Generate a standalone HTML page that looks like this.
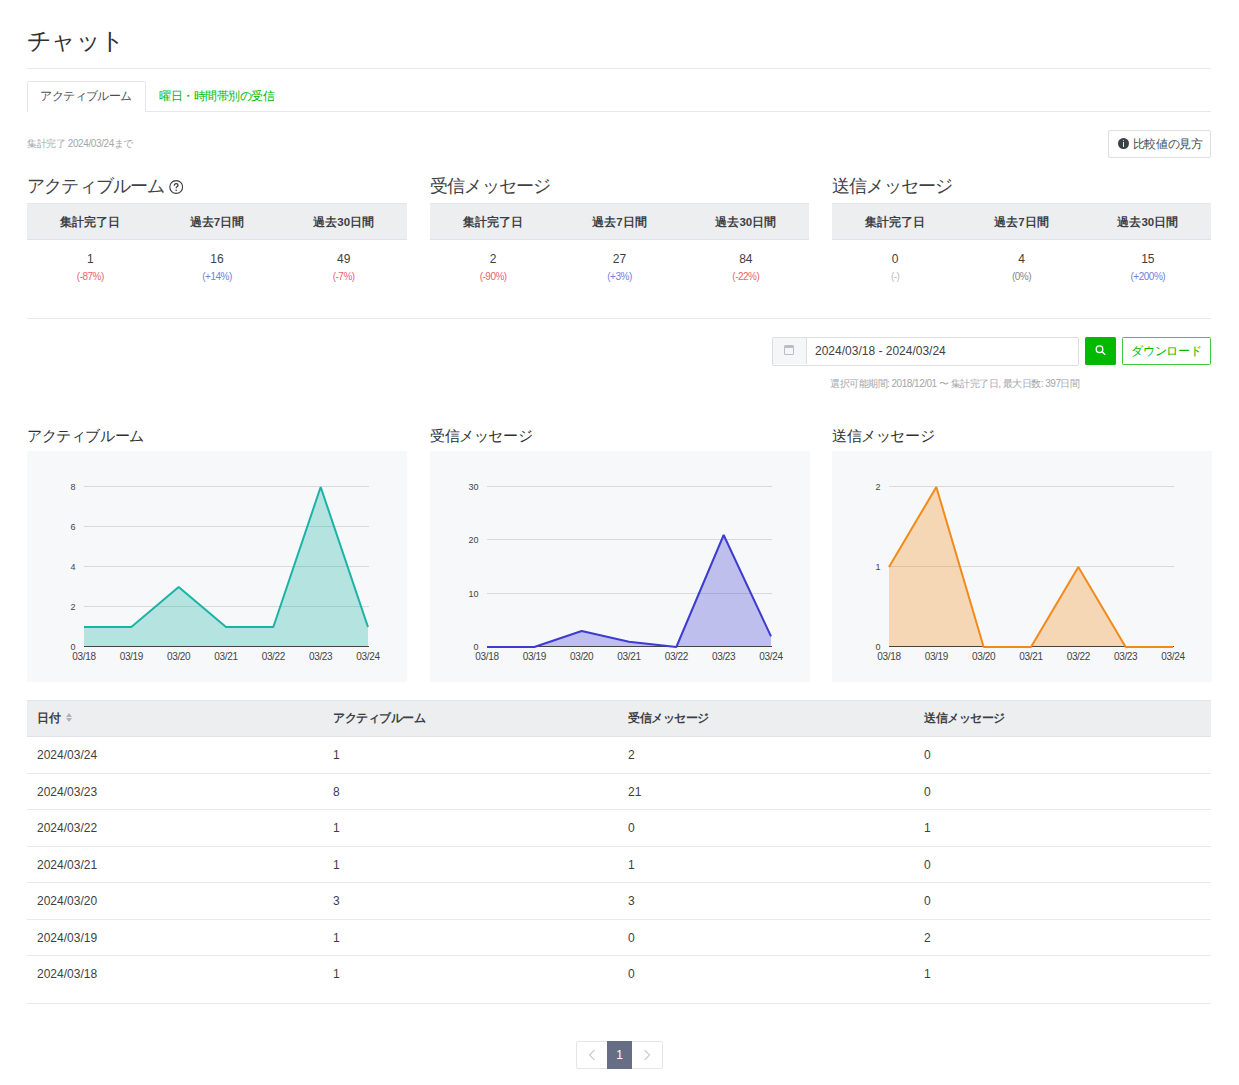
<!DOCTYPE html>
<html lang="ja">
<head>
<meta charset="utf-8">
<style>
*{box-sizing:border-box;margin:0;padding:0}
html,body{width:1239px;height:1085px;overflow:hidden;background:#fff}
body{font-family:"Liberation Sans",sans-serif;color:#333;position:relative}
.a{position:absolute;white-space:nowrap}
.hr{position:absolute;height:1px;background:#e9eaec}
.title{left:27px;top:26px;font-size:24px;line-height:30px;color:#2f3033;letter-spacing:-0.6px}
.tab{left:27px;top:81px;width:119px;height:31px;border:1px solid #e5e7ea;border-radius:2px 2px 0 0;padding-right:1px;border-bottom:none;background:#fff;font-size:12px;line-height:29px;text-align:center;color:#4a4d52;letter-spacing:-0.6px}
.tab2{left:159px;top:82px;font-size:12px;line-height:29px;color:#00b900;letter-spacing:-0.5px}
.note{font-size:10px;color:#a3a6ab;letter-spacing:-0.4px}
.btn1{left:1108px;top:130px;width:103px;height:28px;border:1px solid #dcdee2;border-radius:2px;font-size:12px;line-height:26px;color:#4a4d52;padding-left:23.5px;letter-spacing:-0.3px}
.info{position:absolute;left:9px;top:7px;width:11px;height:11px;border-radius:50%;background:#3c4047}
.info:after{content:"";position:absolute;left:5px;top:4px;width:1.2px;height:5px;background:#e8e9ea}
.info:before{content:"";position:absolute;left:5px;top:2px;width:1.2px;height:1.2px;background:#c8c9cb}
.h2{font-size:18px;line-height:24px;color:#404246;letter-spacing:-0.8px}
.qm{position:absolute;width:15px;height:15px;border:1.3px solid #4a4d52;border-radius:50%;font-size:10px;line-height:12px;text-align:center;color:#4a4d52}
.sum{position:absolute;top:203px;width:379px;height:88px}
.sum .hd{height:37px;background:#eceef0;border-top:1px solid #e4e6e9;border-bottom:1px solid #dfe2e6;display:flex}
.sum .hd div{flex:1;text-align:center;font-size:11.5px;font-weight:bold;line-height:37px;color:#3c3f44}
.sum .bd{display:flex}
.sum .bd div{flex:1;text-align:center}
.v{font-size:12px;line-height:16px;color:#3c3f44;margin-top:11px}
.p{font-size:10px;line-height:14px;margin-top:3px;letter-spacing:-0.5px}
.r{color:#e9646c}.b{color:#7380de}.g{color:#b9bcc1}
.chh{font-size:15px;line-height:20px;color:#2f3033;letter-spacing:-0.4px}
.chart{position:absolute;top:451px;width:380px;height:231px;background:#f7f8fa}
.tbl{position:absolute;left:27px;top:700px;width:1184px}
.tbl .row{position:relative;height:36.5px;border-bottom:1px solid #e9eaec;font-size:12px;color:#3c3f44}
.tbl .row span{position:absolute;top:0;line-height:36px}
.tbl .th span{top:-1px}
.tbl .th{background:#eceef0;font-weight:bold;height:37px;border-top:1px solid #e4e6e9;border-bottom:1px solid #dfe2e6;letter-spacing:-0.5px}
.dp{left:772px;top:337px;width:307px;height:28.5px;border:1px solid #dcdee2;border-radius:2px;font-size:12px;color:#3c3f44}
.cal{position:absolute;left:0;top:0;width:34px;height:26px;background:#f5f6f8;border-right:1px solid #dcdee2}
.cal i{position:absolute;left:11px;top:7px;width:10px;height:10px;border:1px solid #b9bec6;border-top-width:3px;border-radius:1.5px}
.dtxt{position:absolute;left:42px;top:0;line-height:26px}
.sbtn{left:1085px;top:337px;width:31px;height:28px;background:#00b900;border-radius:1.5px}
.sbtn svg{display:block}
.dlbtn{left:1122px;top:337px;width:89px;height:28px;border:1px solid #3ec63e;border-radius:1.5px;color:#00b900;font-size:12px;line-height:26px;text-align:center;letter-spacing:-0.3px}
svg.chart{position:absolute;top:451px}
.yl{font-size:9px;fill:#444;font-family:"Liberation Sans",sans-serif}
.xl{font-size:10px;letter-spacing:-0.35px;fill:#444;font-family:"Liberation Sans",sans-serif}
.tbl .last{height:48px}
.sort{position:absolute;left:28.5px;top:13px;width:8px;height:9px}
.sort:before{content:"";position:absolute;left:0;top:0;border-left:3.7px solid transparent;border-right:3.7px solid transparent;border-bottom:4px solid #aeb3bb}
.sort:after{content:"";position:absolute;left:0;top:5px;border-left:3.7px solid transparent;border-right:3.7px solid transparent;border-top:4px solid #aeb3bb}
.pager{left:576px;top:1041px;width:87px;height:28px;border:1px solid #e3e5e9;border-radius:2px;display:flex}
.pc{width:30px;height:26px;display:flex;align-items:center;justify-content:center}
.pa{width:26px;height:28px;margin-top:-1px;background:#666e86;color:#fff;font-size:12px;line-height:28px;text-align:center}
</style>
</head>
<body>
<div class="a title">チャット</div>
<div class="hr" style="left:27px;top:68px;width:1184px"></div>

<div class="hr" style="left:27px;top:111px;width:1184px;background:#e5e7ea"></div>
<div class="a tab">アクティブルーム</div>
<div class="a tab2">曜日・時間帯別の受信</div>

<div class="a note" style="left:27px;top:137px">集計完了 2024/03/24まで</div>
<div class="a btn1"><span class="info"></span>比較値の見方</div>

<div class="a h2" style="left:27px;top:174px">アクティブルーム</div>
<svg style="position:absolute;left:169px;top:180px" width="15" height="15" viewBox="0 0 15 15"><circle cx="7.2" cy="7" r="6.4" fill="none" stroke="#3a3c40" stroke-width="1.1"/><path d="M5.3 5.6 Q5.4 3.6 7.2 3.6 Q9 3.6 9 5.2 Q9 6.2 7.9 6.8 Q7.2 7.2 7.2 8.3" fill="none" stroke="#3a3c40" stroke-width="1.3"/><circle cx="7.2" cy="10.2" r="0.8" fill="#3a3c40"/></svg>
<div class="a h2" style="left:430px;top:174px">受信メッセージ</div>
<div class="a h2" style="left:832px;top:174px">送信メッセージ</div>

<div class="sum" style="left:27px;width:380px">
 <div class="hd"><div>集計完了日</div><div>過去7日間</div><div>過去30日間</div></div>
 <div class="bd">
  <div><div class="v">1</div><div class="p r">(-87%)</div></div>
  <div><div class="v">16</div><div class="p b">(+14%)</div></div>
  <div><div class="v">49</div><div class="p r">(-7%)</div></div>
 </div>
</div>
<div class="sum" style="left:430px">
 <div class="hd"><div>集計完了日</div><div>過去7日間</div><div>過去30日間</div></div>
 <div class="bd">
  <div><div class="v">2</div><div class="p r">(-90%)</div></div>
  <div><div class="v">27</div><div class="p b">(+3%)</div></div>
  <div><div class="v">84</div><div class="p r">(-22%)</div></div>
 </div>
</div>
<div class="sum" style="left:832px">
 <div class="hd"><div>集計完了日</div><div>過去7日間</div><div>過去30日間</div></div>
 <div class="bd">
  <div><div class="v">0</div><div class="p g">(-)</div></div>
  <div><div class="v">4</div><div class="p" style="color:#85888d">(0%)</div></div>
  <div><div class="v">15</div><div class="p b">(+200%)</div></div>
 </div>
</div>

<div class="hr" style="left:27px;top:318px;width:1184px"></div>

<div class="a dp"><span class="cal"><i></i></span><span class="dtxt">2024/03/18 - 2024/03/24</span></div>
<div class="a sbtn"><svg width="31" height="28" viewBox="0 0 31 28"><circle cx="14.5" cy="12.2" r="3.3" fill="none" stroke="#fff" stroke-width="1.35"/><line x1="16.9" y1="14.6" x2="19.9" y2="17.4" stroke="#fff" stroke-width="1.35" stroke-linecap="round"/></svg></div>
<div class="a dlbtn">ダウンロード</div>
<div class="a note" style="left:830px;top:377px;letter-spacing:-0.5px">選択可能期間: 2018/12/01 〜 集計完了日, 最大日数: 397日間</div>

<div class="a chh" style="left:27px;top:426px">アクティブルーム</div>
<div class="a chh" style="left:430px;top:426px">受信メッセージ</div>
<div class="a chh" style="left:832px;top:426px">送信メッセージ</div>



<svg class="chart" style="left:27px" width="380" height="230" viewBox="0 0 380 230"><rect width="380" height="230" fill="#f7f8fa"/><text x="48.5" y="198.50" text-anchor="end" class="yl">0</text><line x1="57" y1="155.00" x2="342" y2="155.00" stroke="#d9d9d9" stroke-width="1" shape-rendering="crispEdges"/><text x="48.5" y="158.50" text-anchor="end" class="yl">2</text><line x1="57" y1="115.00" x2="342" y2="115.00" stroke="#d9d9d9" stroke-width="1" shape-rendering="crispEdges"/><text x="48.5" y="118.50" text-anchor="end" class="yl">4</text><line x1="57" y1="75.00" x2="342" y2="75.00" stroke="#d9d9d9" stroke-width="1" shape-rendering="crispEdges"/><text x="48.5" y="78.50" text-anchor="end" class="yl">6</text><line x1="57" y1="35.00" x2="342" y2="35.00" stroke="#d9d9d9" stroke-width="1" shape-rendering="crispEdges"/><text x="48.5" y="38.50" text-anchor="end" class="yl">8</text><polygon points="57,195.5 57.00,175.50 104.33,175.50 151.67,135.50 199.00,175.50 246.33,175.50 293.67,35.50 341.00,175.50 341,195.5" fill="#1ab3a6" fill-opacity="0.3"/><line x1="57" y1="195.00" x2="342" y2="195.00" stroke="#444" stroke-width="1" shape-rendering="crispEdges"/><polyline points="57.00,175.50 104.33,175.50 151.67,135.50 199.00,175.50 246.33,175.50 293.67,35.50 341.00,175.50" fill="none" stroke="#1ab3a6" stroke-width="2" stroke-linejoin="bevel"/><text x="57.00" y="208.6" text-anchor="middle" class="xl">03/18</text><text x="104.33" y="208.6" text-anchor="middle" class="xl">03/19</text><text x="151.67" y="208.6" text-anchor="middle" class="xl">03/20</text><text x="199.00" y="208.6" text-anchor="middle" class="xl">03/21</text><text x="246.33" y="208.6" text-anchor="middle" class="xl">03/22</text><text x="293.67" y="208.6" text-anchor="middle" class="xl">03/23</text><text x="341.00" y="208.6" text-anchor="middle" class="xl">03/24</text></svg>
<svg class="chart" style="left:430px" width="380" height="230" viewBox="0 0 380 230"><rect width="380" height="230" fill="#f7f8fa"/><text x="48.5" y="198.50" text-anchor="end" class="yl">0</text><line x1="57" y1="141.67" x2="342" y2="141.67" stroke="#d9d9d9" stroke-width="1" shape-rendering="crispEdges"/><text x="48.5" y="145.17" text-anchor="end" class="yl">10</text><line x1="57" y1="88.33" x2="342" y2="88.33" stroke="#d9d9d9" stroke-width="1" shape-rendering="crispEdges"/><text x="48.5" y="91.83" text-anchor="end" class="yl">20</text><line x1="57" y1="35.00" x2="342" y2="35.00" stroke="#d9d9d9" stroke-width="1" shape-rendering="crispEdges"/><text x="48.5" y="38.50" text-anchor="end" class="yl">30</text><polygon points="57,195.5 57.00,195.50 104.33,195.50 151.67,179.50 199.00,190.17 246.33,195.50 293.67,83.50 341.00,184.83 341,195.5" fill="#3c3cce" fill-opacity="0.3"/><line x1="57" y1="195.00" x2="342" y2="195.00" stroke="#444" stroke-width="1" shape-rendering="crispEdges"/><polyline points="57.00,195.50 104.33,195.50 151.67,179.50 199.00,190.17 246.33,195.50 293.67,83.50 341.00,184.83" fill="none" stroke="#3c3cce" stroke-width="2" stroke-linejoin="bevel"/><text x="57.00" y="208.6" text-anchor="middle" class="xl">03/18</text><text x="104.33" y="208.6" text-anchor="middle" class="xl">03/19</text><text x="151.67" y="208.6" text-anchor="middle" class="xl">03/20</text><text x="199.00" y="208.6" text-anchor="middle" class="xl">03/21</text><text x="246.33" y="208.6" text-anchor="middle" class="xl">03/22</text><text x="293.67" y="208.6" text-anchor="middle" class="xl">03/23</text><text x="341.00" y="208.6" text-anchor="middle" class="xl">03/24</text></svg>
<svg class="chart" style="left:832px" width="379" height="230" viewBox="0 0 380 230"><rect width="380" height="230" fill="#f7f8fa"/><text x="48.5" y="198.50" text-anchor="end" class="yl">0</text><line x1="57" y1="115.00" x2="342" y2="115.00" stroke="#d9d9d9" stroke-width="1" shape-rendering="crispEdges"/><text x="48.5" y="118.50" text-anchor="end" class="yl">1</text><line x1="57" y1="35.00" x2="342" y2="35.00" stroke="#d9d9d9" stroke-width="1" shape-rendering="crispEdges"/><text x="48.5" y="38.50" text-anchor="end" class="yl">2</text><polygon points="57,195.5 57.00,115.50 104.33,35.50 151.67,195.50 199.00,195.50 246.33,115.50 293.67,195.50 341.00,195.50 341,195.5" fill="#f28a1a" fill-opacity="0.3"/><line x1="57" y1="195.00" x2="342" y2="195.00" stroke="#444" stroke-width="1" shape-rendering="crispEdges"/><polyline points="57.00,115.50 104.33,35.50 151.67,195.50 199.00,195.50 246.33,115.50 293.67,195.50 341.00,195.50" fill="none" stroke="#f28a1a" stroke-width="2" stroke-linejoin="bevel"/><text x="57.00" y="208.6" text-anchor="middle" class="xl">03/18</text><text x="104.33" y="208.6" text-anchor="middle" class="xl">03/19</text><text x="151.67" y="208.6" text-anchor="middle" class="xl">03/20</text><text x="199.00" y="208.6" text-anchor="middle" class="xl">03/21</text><text x="246.33" y="208.6" text-anchor="middle" class="xl">03/22</text><text x="293.67" y="208.6" text-anchor="middle" class="xl">03/23</text><text x="341.00" y="208.6" text-anchor="middle" class="xl">03/24</text></svg>
<div class="tbl">
<div class="row th"><span style="left:10px">日付 <i class="sort"></i></span><span style="left:306px">アクティブルーム</span><span style="left:601px">受信メッセージ</span><span style="left:897px">送信メッセージ</span></div>
<div class="row"><span style="left:10px">2024/03/24</span><span style="left:306px">1</span><span style="left:601px">2</span><span style="left:897px">0</span></div>
<div class="row"><span style="left:10px">2024/03/23</span><span style="left:306px">8</span><span style="left:601px">21</span><span style="left:897px">0</span></div>
<div class="row"><span style="left:10px">2024/03/22</span><span style="left:306px">1</span><span style="left:601px">0</span><span style="left:897px">1</span></div>
<div class="row"><span style="left:10px">2024/03/21</span><span style="left:306px">1</span><span style="left:601px">1</span><span style="left:897px">0</span></div>
<div class="row"><span style="left:10px">2024/03/20</span><span style="left:306px">3</span><span style="left:601px">3</span><span style="left:897px">0</span></div>
<div class="row"><span style="left:10px">2024/03/19</span><span style="left:306px">1</span><span style="left:601px">0</span><span style="left:897px">2</span></div>
<div class="row last"><span style="left:10px">2024/03/18</span><span style="left:306px">1</span><span style="left:601px">0</span><span style="left:897px">1</span></div>
</div>

<div class="a pager"><span class="pc"><svg width="8" height="12" viewBox="0 0 8 12"><polyline points="6.5,1 1.5,6 6.5,11" fill="none" stroke="#ccd0d7" stroke-width="1.3"/></svg></span><span class="pa">1</span><span class="pc"><svg width="8" height="12" viewBox="0 0 8 12"><polyline points="1.5,1 6.5,6 1.5,11" fill="none" stroke="#ccd0d7" stroke-width="1.3"/></svg></span></div>
</body>
</html>
